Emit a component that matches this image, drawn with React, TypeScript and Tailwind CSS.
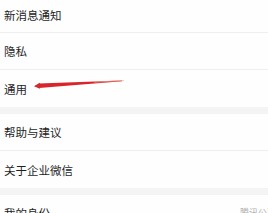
const font = { fontFamily: '"Noto Sans CJK SC", "Noto Sans", sans-serif' };

function Row({ label, last, first }: { label: string; last?: boolean; first?: boolean }) {
  return (
    <div className={`${first ? 'h-[33px]' : 'h-[37px]'} bg-[#fefefe] ${last ? '' : 'border-b border-[#efefef]'}`}>
      <div className={`flex h-full items-center pl-[4px] ${first ? 'pt-0' : 'pt-[2px]'}`}>
        <span className="text-[11.5px] leading-none text-[#1e1e1e]">{label}</span>
      </div>
    </div>
  );
}

export default function App() {
  return (
    <div className="relative h-[213px] w-[268px] overflow-hidden bg-[#f4f4f4]" style={font}>
      <Row label="新消息通知" first />
      <Row label="隐私" />
      <Row label="通用" last />
      <div className="h-[7px]" />
      <Row label="帮助与建议" />
      <Row label="关于企业微信" last />
      <div className="h-[7px]" />
      <div className="h-[37px] bg-[#fefefe]">
        <div className="flex h-full items-start justify-between pl-[4px] pt-[13px]">
          <span className="text-[11.5px] leading-none text-[#1e1e1e]">我的身份</span>
          <span className="mr-[-8px] mt-[0px] whitespace-nowrap text-[9px] leading-none text-[#b0b0b0]">腾讯公司</span>
        </div>
      </div>
      <svg className="absolute left-[34px] top-[78px]" width="92" height="12" viewBox="0 0 92 12">
        <polygon points="1,8 5,5.4 88,2.4 88,3.2 5,10" fill="#d8242a" />
        <polygon points="0,8.2 6,4.8 6,10.8" fill="#d22a2a" />
        <polygon points="60,3.6 90,2.3 90,2.9 60,4.8" fill="#e6a08a" opacity="0.7" />
      </svg>
    </div>
  );
}
